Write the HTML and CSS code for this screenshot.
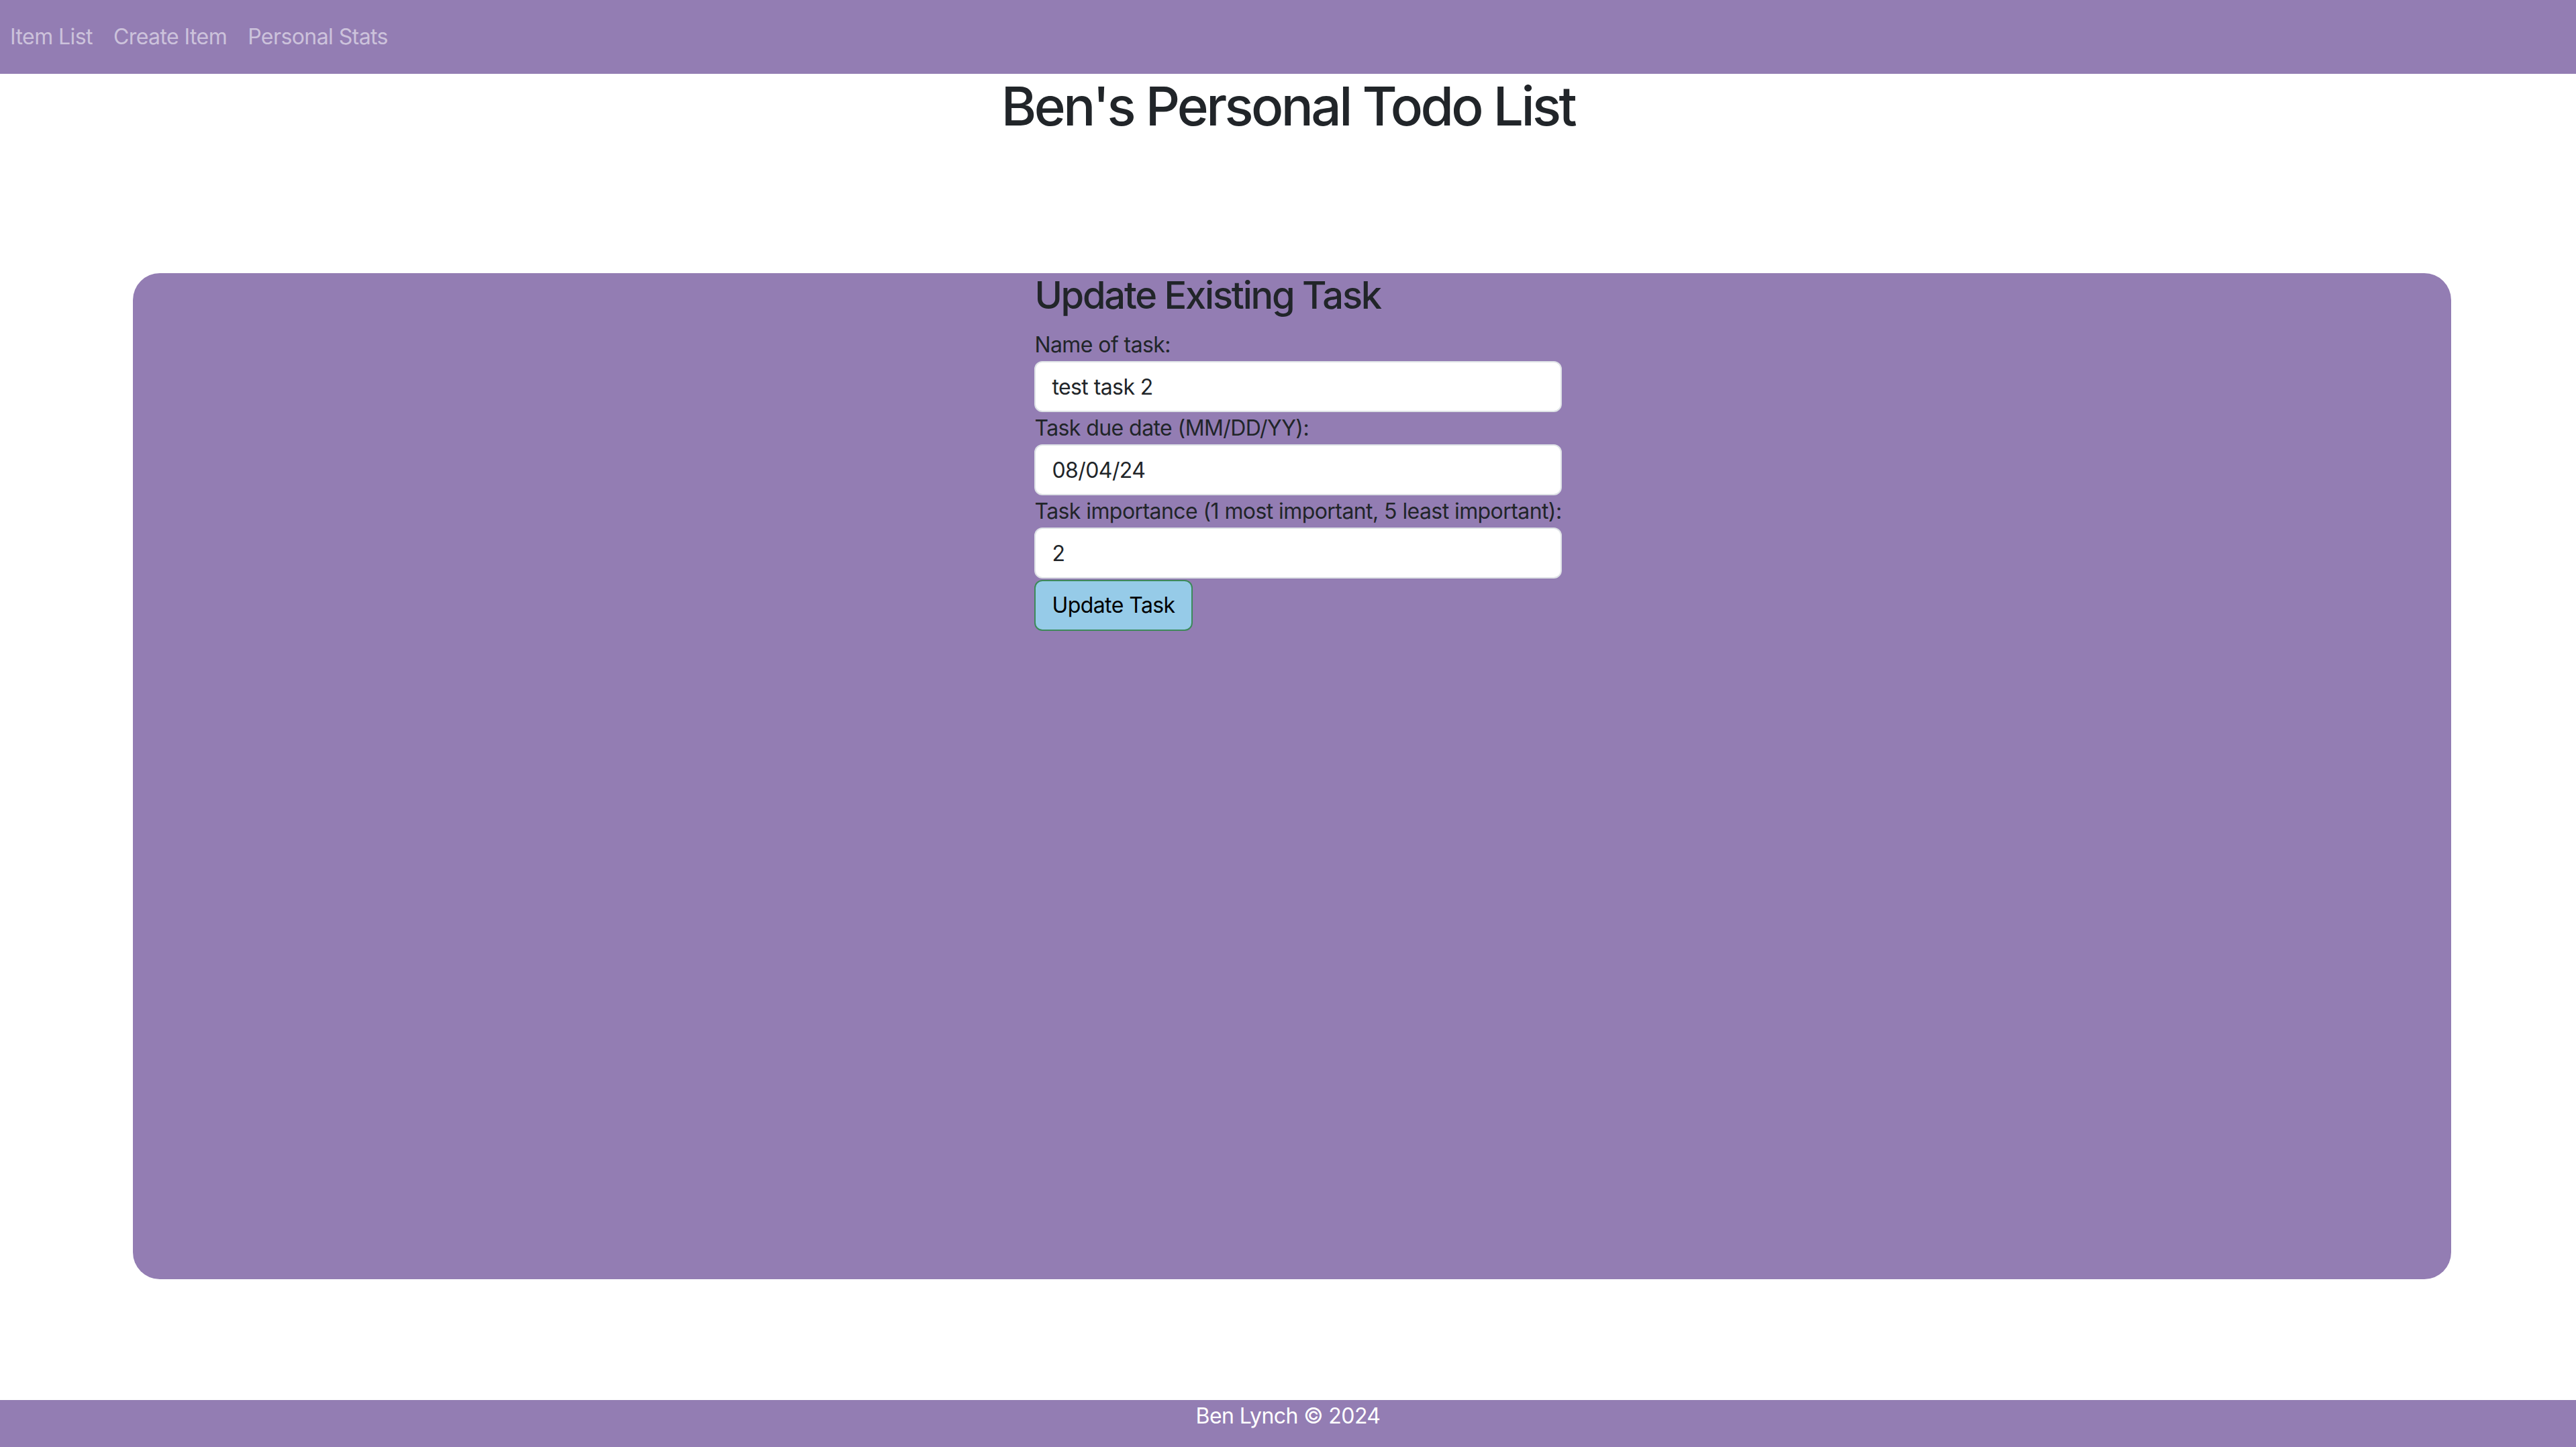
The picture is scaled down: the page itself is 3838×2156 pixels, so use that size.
FILE: index.html
```html
<!DOCTYPE html>
<html lang="en">
<head>
<meta charset="utf-8">
<title>Ben's Personal Todo List</title>
<link rel="stylesheet" href="styles.css">
</head>
<body>
  <nav class="navbar">
    <a class="nav-link" href="#">Item List</a>
    <a class="nav-link" href="#">Create Item</a>
    <a class="nav-link" href="#">Personal Stats</a>
  </nav>
  <main class="main">
    <h1 class="page-title">Ben's Personal Todo List</h1>
    <section class="card">
      <form class="task-form">
        <h3 class="form-title">Update Existing Task</h3>
        <label class="form-label" for="name">Name of task:</label>
        <input class="form-control" id="name" type="text" value="test task 2">
        <label class="form-label" for="due">Task due date (MM/DD/YY):</label>
        <input class="form-control" id="due" type="text" value="08/04/24">
        <label class="form-label" for="imp">Task importance (1 most important, 5 least important):</label>
        <input class="form-control" id="imp" type="text" value="2">
        <div class="actions"><button class="btn" type="button">Update Task</button></div>
      </form>
    </section>
  </main>
  <footer class="footer">Ben Lynch © 2024</footer>
</body>
</html>
```
FILE: styles.css
```css
* { box-sizing: border-box; }
html, body { margin: 0; padding: 0; }
body {
  font-family: Inter, "Noto Sans", sans-serif;
  font-size: 32px;
  line-height: 1.5;
  letter-spacing: -0.018em;
  color: #212529;
  background: #ffffff;
  min-height: 100vh;
  display: flex;
  flex-direction: column;
}
.navbar {
  height: 110px;
  flex: 0 0 110px;
  background: #937db3;
  display: flex;
  align-items: center;
  padding: 0;
}
.nav-link {
  color: rgba(255, 255, 255, 0.55);
  text-decoration: none;
  padding: 0 16px 0 15px;
  font-size: 32px;
}
.main { flex: 0 0 auto; }
.page-title {
  margin: 0 0 16px;
  font-size: 80px;
  font-weight: 500;
  line-height: 1.2;
  letter-spacing: -0.045em;
  text-align: center;
  color: #212529;
}
.card {
  margin: 201px 186px 0 198px;
  height: 1499px;
  background: #937db3;
  border-radius: 40px;
  display: flex;
  justify-content: center;
  padding-left: 18px;
}
.task-form {
  display: flex;
  flex-direction: column;
  width: max-content;
}
.form-title {
  margin: 0 0 16px;
  font-size: 56px;
  font-weight: 500;
  line-height: 1.2;
  letter-spacing: -0.04em;
}
.form-label { display: block; }
.form-control {
  display: block;
  width: 100%;
  height: 76px;
  padding: 12px 24px;
  font-family: inherit;
  font-size: 32px;
  line-height: 1.5;
  letter-spacing: -0.018em;
  color: #212529;
  background: #fff;
  border: 2px solid #dee2e6;
  border-radius: 12px;
}
.actions { display: flex; }
.btn {
  font-family: inherit;
  font-size: 32px;
  line-height: 1.5;
  letter-spacing: -0.018em;
  padding: 12px 24px;
  color: #000;
  background: #96cbe8;
  border: 2px solid #3d8a5a;
  border-radius: 12px;
  margin-top: 2px;
}
.footer {
  margin-top: auto;
  height: 70px;
  flex: 0 0 70px;
  background: #937db3;
  color: #fff;
  text-align: center;
  line-height: 48px;
  font-size: 32px;
}
```
